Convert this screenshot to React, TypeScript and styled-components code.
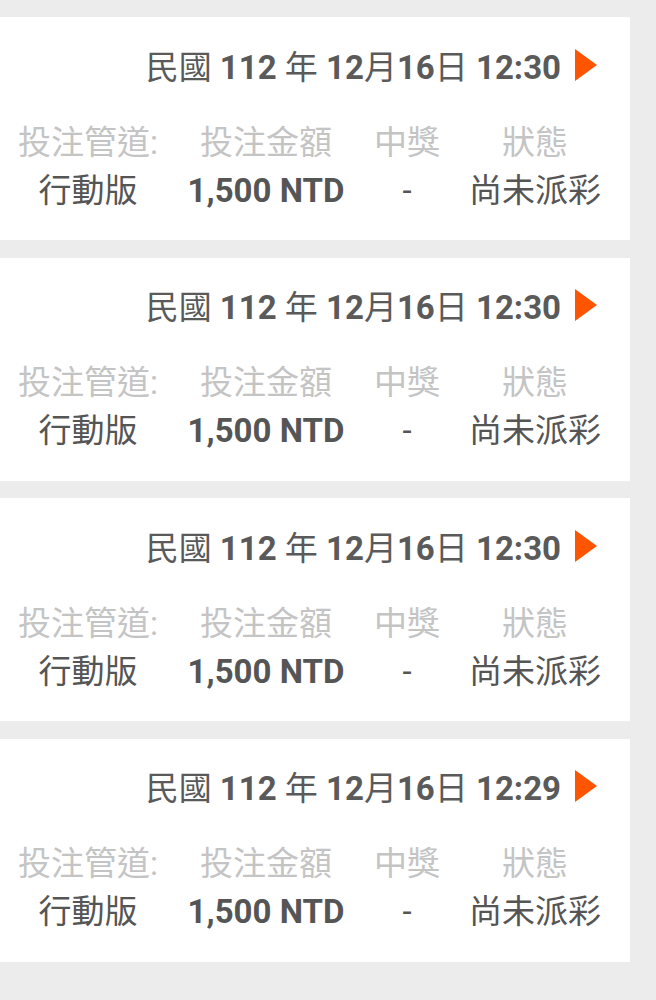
import React from "react";
import styled, { createGlobalStyle } from "styled-components";

const Global = createGlobalStyle`
  html, body { margin: 0; padding: 0; background: #ececec; }
  body { font-family: Roboto, "Noto Sans CJK TC", "Noto Sans", sans-serif; }
`;

const Page = styled.div`
  display: flex;
  flex-direction: column;
  gap: 17.6px;
  padding-top: 17px;
  width: 630px;
`;

const Card = styled.div`
  background: #ffffff;
  height: 223px;
  box-sizing: border-box;
  padding: 27.5px 33px 0 0;
  display: flex;
  flex-direction: column;
`;

const Header = styled.div`
  display: flex;
  justify-content: flex-end;
  align-items: center;
  gap: 14px;
  height: 40px;
  color: #5a5a5a;
  font-size: 33px;
`;

const HeaderText = styled.div`
  font-family: Roboto, "Noto Sans CJK TC", sans-serif;
  white-space: pre;
`;

const Num = styled.span`
  font-weight: 700;
`;

const Arrow = styled.svg`
  width: 22px;
  height: 32px;
  flex: none;
`;

const Grid = styled.div`
  display: grid;
  grid-template-columns: 176px 180px 102px 154px;
  row-gap: 4px;
  margin-top: 36px;
`;

const Label = styled.div<{ $muted?: boolean }>`
  text-align: center;
  font-size: 33px;
  line-height: 44px;
  color: ${(p) => (p.$muted ? "#c4c4c4" : "#555555")};
  white-space: nowrap;
`;

const Bold = styled.span`
  font-weight: 700;
`;

type Item = { time: string };

const items: Item[] = [
  { time: "12:30" },
  { time: "12:30" },
  { time: "12:30" },
  { time: "12:29" },
];

export default function App() {
  return (
    <>
      <Global />
      <Page>
        {items.map((it, i) => (
          <Card key={i}>
            <Header>
              <HeaderText>
                民國 <Num>112</Num> 年 <Num>12</Num>月<Num>16</Num>日 <Num>{it.time}</Num>
              </HeaderText>
              <Arrow viewBox="0 0 22 32">
                <polygon points="0,0 22,16 0,32" fill="#ff5500" />
              </Arrow>
            </Header>
            <Grid>
              <Label $muted>投注管道:</Label>
              <Label $muted>投注金額</Label>
              <Label $muted>中獎</Label>
              <Label $muted>狀態</Label>
              <Label>行動版</Label>
              <Label>
                <Bold>1,500 NTD</Bold>
              </Label>
              <Label>-</Label>
              <Label>尚未派彩</Label>
            </Grid>
          </Card>
        ))}
      </Page>
    </>
  );
}
